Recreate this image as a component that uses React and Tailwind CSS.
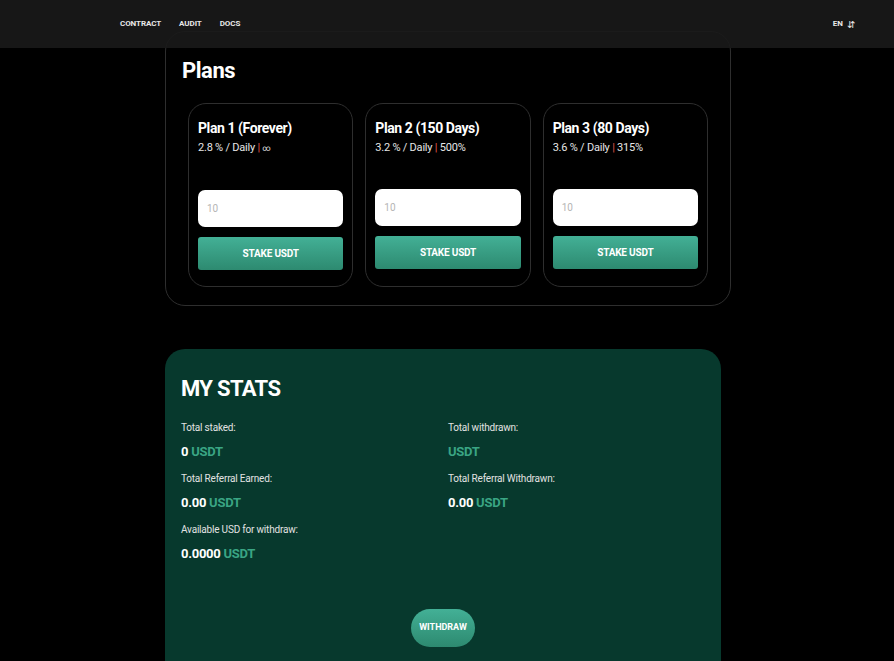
import React from 'react'

const font = { fontFamily: 'Roboto, "Liberation Sans", sans-serif' }

const plans = [
    { title: 'Plan 1 (Forever)', rate: '2.8 % / Daily', total: '∞' },
    { title: 'Plan 2 (150 Days)', rate: '3.2 % / Daily', total: '500%' },
    { title: 'Plan 3 (80 Days)', rate: '3.6 % / Daily', total: '315%' },
]

function PlanCard({ plan }) {
    return (
        <div className="flex flex-col rounded-[18px] border border-[#2e2e2e] px-[9px] pt-[14px] pb-[16px]">
            <h3 className="text-[14px] font-bold leading-[20px] tracking-[-0.03em] text-white">{plan.title}</h3>
            <p className="mt-[2px] text-[11px] leading-[16px] tracking-[-0.02em] text-[#e6e6e6]">
                {plan.rate} <span className="text-[#e0574a]">|</span>{' '}
                <span className={plan.total === '∞' ? 'text-[8px]' : ''}>{plan.total}</span>
            </p>
            <input
                type="text"
                placeholder="10"
                className="mt-[33px] h-[37px] w-full rounded-[7px] bg-white px-[9px] text-[10px] text-gray-800 outline-none placeholder:text-[#b5b5b5]"
            />
            <button className="mt-[10px] h-[33px] w-full rounded-[3px] bg-gradient-to-b from-[#43b096] to-[#2d8a70] text-[10px] font-bold tracking-[-0.02em] text-white">
                STAKE USDT
            </button>
        </div>
    )
}

function Stat({ label, value }) {
    return (
        <div className="h-[51px]">
            <p className="text-[10px] leading-[14px] tracking-[-0.02em] text-[#e2e2e2]">{label}</p>
            <p className="mt-[7px] text-[13px] font-bold leading-[20px] tracking-[-0.02em] text-white">
                {value && <span>{value} </span>}
                <span className="text-[#3aa584]">USDT</span>
            </p>
        </div>
    )
}

export default function App() {
    return (
        <div className="relative h-[661px] overflow-hidden bg-black" style={font}>
            {/* header */}
            <header className="absolute inset-x-0 top-0 z-10 flex h-[48px] items-center justify-between bg-[#1a1a1a]/90 pl-[120px] pr-[39px]">
                <nav className="flex gap-[18px] text-[8px] font-bold tracking-[-0.01em] text-[#e8e8e8]">
                    <a>CONTRACT</a>
                    <a>AUDIT</a>
                    <a>DOCS</a>
                </nav>
                <div className="flex items-center gap-[4px] text-[8px] font-bold text-[#e8e8e8]">
                    <span>EN</span>
                    <span className="text-[10px] font-normal">⇵</span>
                </div>
            </header>

            <main className="ml-[165px] w-[566px] pt-[31px]">
                {/* plans */}
                <section className="rounded-[20px] border border-[#2e2e2e] px-[22px] pt-[24px] pb-[18px]">
                    <h2 className="-ml-[6px] text-[22px] font-bold leading-[30px] tracking-[-0.02em] text-white">Plans</h2>
                    <div className="mt-[17px] grid grid-cols-3 gap-[12px]">
                        {plans.map((p) => (
                            <PlanCard key={p.title} plan={p} />
                        ))}
                    </div>
                </section>

                {/* stats */}
                <section className="mt-[43px] h-[340px] w-[556px] rounded-[20px] bg-[#07392d] px-[16px] pt-[24px]">
                    <h2 className="text-[22px] font-bold leading-[32px] tracking-[-0.03em] text-white">MY STATS</h2>
                    <div className="mt-[16px] grid grid-cols-2">
                        <div>
                            <Stat label="Total staked:" value="0" />
                            <Stat label="Total Referral Earned:" value="0.00" />
                            <Stat label="Available USD for withdraw:" value="0.0000" />
                        </div>
                        <div className="pl-[5px]">
                            <Stat label="Total withdrawn:" value="" />
                            <Stat label="Total Referral Withdrawn:" value="0.00" />
                        </div>
                    </div>
                    <div className="mt-[35px] flex justify-center">
                        <button className="h-[38px] w-[64px] rounded-[19px] bg-gradient-to-b from-[#43b096] to-[#2d8a70] text-[9px] font-bold text-white">
                            WITHDRAW
                        </button>
                    </div>
                </section>
            </main>
        </div>
    )
}
